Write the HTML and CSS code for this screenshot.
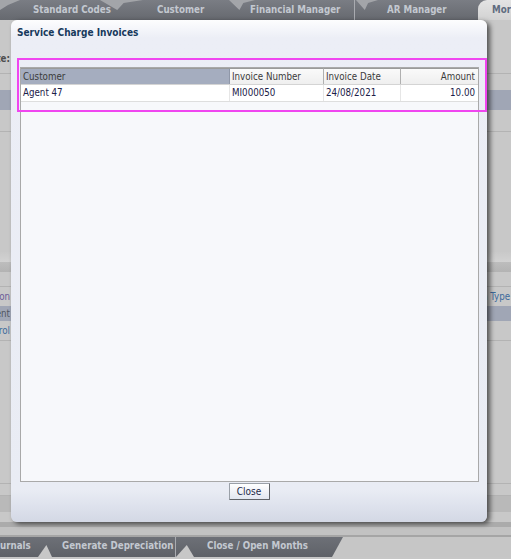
FILE: index.html
```html
<!DOCTYPE html>
<html>
<head>
<meta charset="utf-8">
<link rel="stylesheet" href="styles.css">
</head>
<body>
<div class="page">
  <div class="tabbar">
    <div class="tab t1">Standard Codes</div>
    <div class="tab t2">Customer</div>
    <div class="tab t3">Financial Manager</div>
    <div class="tab t4">AR Manager</div>
    <div class="tab t5">Mor</div>
    <span class="notch n1"></span>
    <span class="notch n2"></span>
    <span class="notch n3"></span>
    <span class="notch n4"></span>
  </div>

  <div class="bg">
    <div class="bgrow h30"></div>
    <div class="bgrow h16"><span class="lcell lab">Date:</span></div>
    <div class="bgrow h8 line"></div>
    <div class="bgrow h16"></div>
    <div class="bgrow h20 hl"></div>
    <div class="bgrow h22 line"></div>
    <div class="bgrow h120"></div>
    <div class="bgrow hdrlight"></div>
    <div class="bgrow hdrdark"></div>
    <div class="bgrow h15 line"></div>
    <div class="bgrow h19"><span class="lcell txt purple">Description</span><span class="rcell txt blue"><span class="rtext">n Type</span></span></div>
    <div class="bgrow h15 hl"><span class="lcell txt grey">Parent</span><span class="rcell"></span></div>
    <div class="bgrow h20 line"><span class="lcell txt blue">Control</span></div>
    <div class="bgrow fill"></div>
    <div class="bgrow h15 line"></div>
    <div class="bgrow h12 line"></div>
    <div class="bgrow h16 band"></div>
    <div class="bgrow h10"></div>
  </div>

  <div class="stripes">
    <div class="s1"></div>
    <div class="s2"></div>
    <div class="s3"></div>
  </div>

  <div class="bottabs">
    <div class="btab b1">urnals</div>
    <div class="btab b2">Generate Depreciation</div>
    <div class="btab b3">Close / Open Months</div>
    <span class="bnotch bn1"></span>
    <span class="bnotch bn2"></span>
  </div>
  <div class="bottom-edge"></div>
</div>

<div class="dialog">
  <div class="dlg-title">Service Charge Invoices</div>
  <div class="grid">
    <div class="grid-head">
      <div class="hc c1 sorted">Customer</div>
      <div class="hc c2">Invoice Number</div>
      <div class="hc c3">Invoice Date</div>
      <div class="hc c4 num">Amount</div>
    </div>
    <div class="grid-row">
      <div class="dc c1">Agent 47</div>
      <div class="dc c2">MI000050</div>
      <div class="dc c3">24/08/2021</div>
      <div class="dc c4 num">10.00</div>
    </div>
  </div>
  <div class="dlg-foot">
    <button class="btn">Close</button>
  </div>
</div>

<div class="highlight"></div>
</body>
</html>
```

FILE: styles.css
```css
html, body {
  margin: 0;
  padding: 0;
  width: 511px;
  height: 559px;
  overflow: hidden;
  background: #c6c6c6;
  font-family: "DejaVu Sans Condensed", "DejaVu Sans", "Liberation Sans", sans-serif;
  font-size: 9.7px;
}

.page {
  display: flex;
  flex-direction: column;
  height: 559px;
}

/* ---------- top tabs ---------- */
.tabbar {
  position: relative;
  height: 20px;
  display: flex;
  background: linear-gradient(#7a7d84, #66696f);
  flex: none;
}
.tab {
  color: #c3c8d0;
  font-weight: bold;
  line-height: 20px;
  white-space: nowrap;
  box-sizing: border-box;
  overflow: hidden;
}
.t1 { width: 125px; padding-left: 33px; }
.t2 { width: 105px; padding-left: 32px; }
.t3 { width: 125px; padding-left: 20px; border-right: 1px solid #a9abb0; }
.t4 { width: 123px; padding-left: 32px; }
.t5 {
  flex: 1;
  padding-left: 14px;
  background: linear-gradient(#e4e4e4, #d2d2d2);
  color: #5f6c80;
  border-top-left-radius: 9px;
}
.notch {
  position: absolute;
  top: 0;
  height: 10px;
  background: #a3a5a9;
  clip-path: polygon(0 0, 100% 0, 55% 30%, 40% 100%);
}
.n1 { left: 0; width: 20px; clip-path: polygon(0 0, 100% 0, 40% 50%, 0 100%); }
.n2 { left: 100px; width: 43px; }
.n3 { left: 229px; width: 26px; }
.n4 { left: 356px; width: 22px; }

/* ---------- dimmed background ---------- */
.bg {
  flex: 1;
  display: flex;
  flex-direction: column;
  background: #c8c8c8;
}
.bgrow {
  flex: none;
  display: flex;
  justify-content: space-between;
  align-items: center;
  box-sizing: border-box;
}
.h30 { height: 30px; }
.h16 { height: 16px; }
.h8 { height: 8px; }
.h20 { height: 20px; }
.h22 { height: 22px; }
.h120 { height: 120px; }
.h15 { height: 15px; }
.h19 { height: 19px; }
.h12 { height: 12px; }
.h10 { height: 10px; }
.fill { flex: 1; }
.line { border-bottom: 1px solid #b3b3b3; }
.hl { background: #a0a6b5; }
.band { background: #b9b9b9; }
.hdrlight { height: 10px; background: linear-gradient(#c9c9c9, #d2d2d2); }
.hdrdark { height: 10px; background: linear-gradient(#bdbdbd, #b3b3b3); }

.lcell {
  width: 10px;
  overflow: hidden;
  display: flex;
  justify-content: flex-end;
  white-space: nowrap;
}
.rcell {
  width: 26px;
  overflow: hidden;
  white-space: nowrap;
  display: flex;
  justify-content: flex-start;
}
.rtext { margin-left: -3px; }
.lab { color: #4e4e4e; font-weight: bold; }
.txt { color: #555; }
.purple { color: #6b5c98; }
.blue { color: #3d6a9c; }
.grey { color: #505560; }

.stripes { flex: none; display: flex; flex-direction: column; }
.s1 { height: 5px; background: #ababab; }
.s2 { height: 8px; background: #c2c2c2; }
.s3 { height: 2px; background: #a5a5a5; }

/* ---------- bottom tabs ---------- */
.bottabs {
  position: relative;
  flex: none;
  height: 20px;
  width: 343px;
  display: flex;
  background: linear-gradient(#6d7077, #5f6268);
  clip-path: polygon(0 0, 100% 0, 96.8% 100%, 0 100%);
}
.btab {
  color: #c3c8d0;
  font-weight: bold;
  line-height: 18px;
  white-space: nowrap;
  box-sizing: border-box;
}
.b1 { width: 50px; }
.b2 { width: 126px; padding-left: 12px; border-right: 1px solid #a9abb0; }
.b3 { padding-left: 31px; }
.bnotch {
  position: absolute;
  bottom: 0;
  height: 12px;
  background: #c7c7c7;
  clip-path: polygon(60% 0, 100% 100%, 0 100%);
}
.bn1 { left: 38px; width: 14px; }
.bn2 { left: 176px; width: 18px; }
.bottom-edge { flex: none; height: 2px; background: #c7c7c7; }

/* ---------- dialog ---------- */
.dialog {
  position: absolute;
  left: 11px;
  top: 20px;
  width: 476px;
  height: 502px;
  box-sizing: border-box;
  border-radius: 6px;
  background: linear-gradient(#fdfdfe 0, #eceef6 18px, #e9ecf4 470px, #d3d8e5 100%);
  box-shadow: 3px 2px 5px rgba(0, 0, 0, 0.6);
  display: flex;
  flex-direction: column;
  padding: 0 8px 0 9px;
}
.dlg-title {
  height: 26px;
  line-height: 24px;
  padding-top: 1px;
  margin-left: -3px;
  font-weight: bold;
  color: #17395c;
  font-size: 10px;
}
.grid {
  margin-top: 20px;
  height: 415px;
  border: 1px solid #a9a9a9;
  background: #f7f8fb;
  box-sizing: border-box;
}
.grid-head, .grid-row {
  display: flex;
}
.grid-head {
  height: 16px;
  border-bottom: 1px solid #d4d4d4;
}
.grid-row {
  height: 16px;
  background: #fff;
  border-bottom: 1px solid #dedede;
}
.hc, .dc {
  box-sizing: border-box;
  padding: 0 3px 0 2px;
  white-space: nowrap;
  overflow: hidden;
}
.hc {
  line-height: 15px;
  color: #3b3b3b;
  background: linear-gradient(#fafafa, #efefef);
  border-top: 1px solid #9a9a9a;
  border-right: 1px solid #b0b0b0;
}
.hc.sorted {
  background: #a5adbf;
  border-right-color: #8f97a8;
}
.dc {
  line-height: 15px;
  color: #1a2048;
  border-right: 1px solid #e6e6e6;
}
.c1 { width: 209px; }
.c2 { width: 94px; }
.c3 { width: 77px; }
.c4 { width: 77px; border-right: none; }
.num { text-align: right; }

.dlg-foot {
  display: flex;
  justify-content: center;
  padding-top: 1px;
  margin-left: -1px;
}
.btn {
  width: 41px;
  height: 17px;
  padding: 0;
  font-family: inherit;
  font-size: 10px;
  color: #1c2a4a;
  background: linear-gradient(#ffffff, #e2e7f0);
  border: 1px solid #9aa0a8;
  border-right-color: #5f6368;
  border-bottom-color: #5f6368;
  border-radius: 1px;
}

/* ---------- annotation overlay ---------- */
.highlight {
  position: absolute;
  left: 17px;
  top: 58px;
  width: 470px;
  height: 54px;
  box-sizing: border-box;
  border: 2px solid #f046f0;
}
```
